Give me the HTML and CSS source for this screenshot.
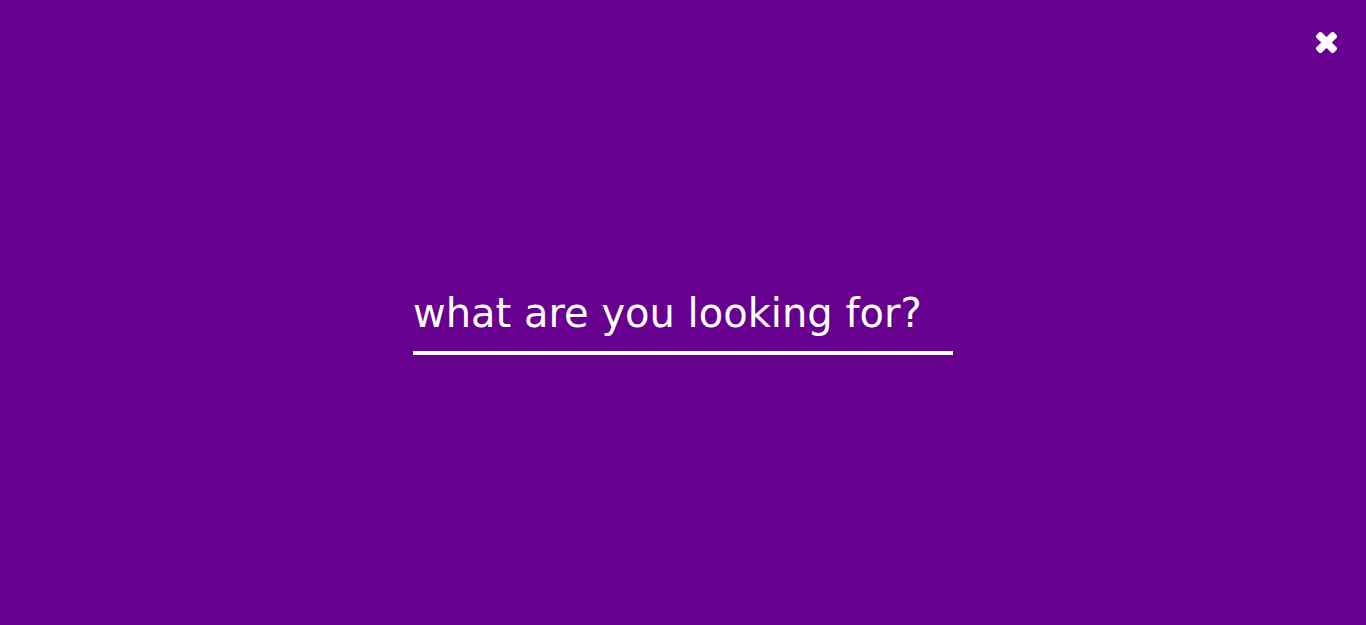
FILE: index.html
```html
<!DOCTYPE html>
<html lang="en">
<head>
  <meta charset="utf-8">
  <meta name="viewport" content="width=device-width, initial-scale=1">
  <title>Search</title>
  <link rel="stylesheet" href="styles.css">
</head>
<body>
  <main class="search-overlay">
    <button class="close-button" type="button" aria-label="Close search">
      <svg class="close-icon" viewBox="80 228 1248 1248" aria-hidden="true">
        <path fill="currentColor" stroke="currentColor" stroke-width="60" stroke-linejoin="round" d="M1298 1214q0 40-28 68l-136 136q-28 28-68 28t-68-28l-294-294-294 294q-28 28-68 28t-68-28l-136-136q-28-28-28-68t28-68l294-294-294-294q-28-28-28-68t28-68l136-136q28-28 68-28t68 28l294 294 294-294q28-28 68-28t68 28l136 136q28 28 28 68t-28 68l-294 294 294 294q28 28 28 68z"/>
      </svg>
    </button>
    <form class="search-form" role="search">
      <input class="search-input" type="text" name="q" placeholder="what are you looking for?" aria-label="what are you looking for?" autocomplete="off">
    </form>
  </main>
</body>
</html>
```
FILE: styles.css
```css
* {
  box-sizing: border-box;
}

body {
  margin: 0;
  font-family: Verdana, "DejaVu Sans", sans-serif;
}

.search-overlay {
  position: relative;
  display: flex;
  align-items: center;
  justify-content: center;
  min-height: 100vh;
  padding: 24px;
  background: #68008f;
  color: #fff;
}

.close-button {
  position: absolute;
  top: 24px;
  right: 21px;
  display: flex;
  padding: 8px;
  border: 0;
  background: transparent;
  color: inherit;
  cursor: pointer;
}

.close-icon {
  width: 21px;
  height: 21px;
}

.search-form {
  width: 100%;
  max-width: 540px;
}

.search-input {
  display: block;
  width: 100%;
  height: 84px;
  padding: 4px 0 0;
  border: 0;
  border-bottom: 4px solid #fff;
  border-radius: 0;
  outline: 0;
  background: transparent;
  color: inherit;
  font-family: inherit;
  font-size: 40px;
}

.search-input::placeholder {
  color: inherit;
  opacity: 1;
}
```
